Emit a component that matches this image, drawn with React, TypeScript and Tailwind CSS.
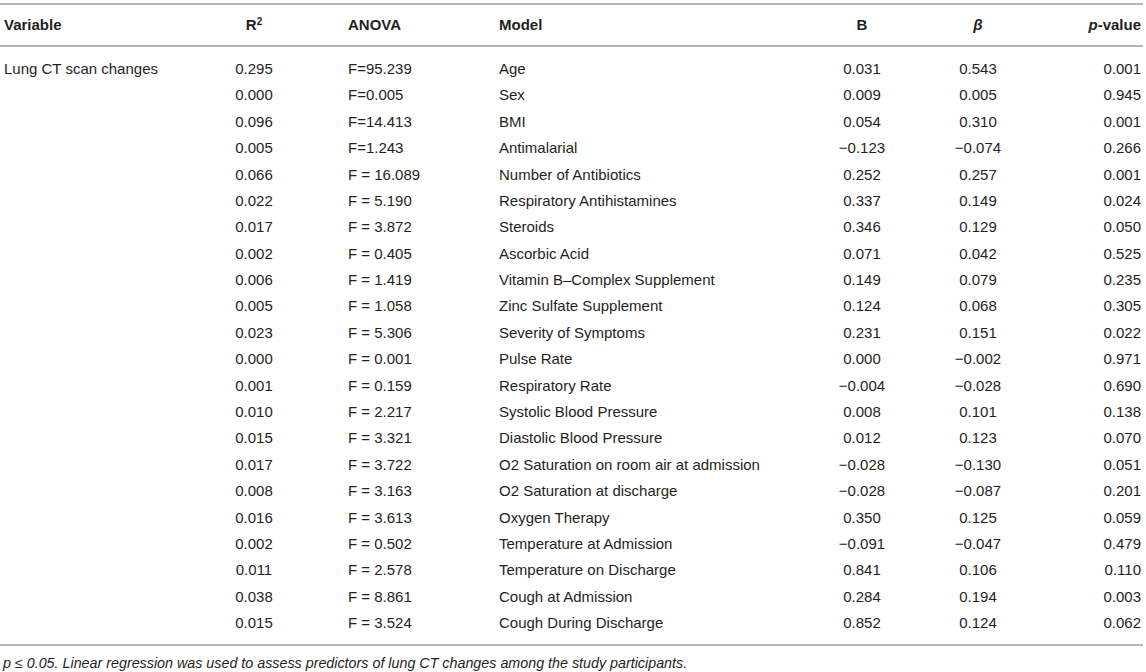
import React from "react";

const rows: [string, string, string, string, string, string][] = [
  ["0.295", "F=95.239", "Age", "0.031", "0.543", "0.001"],
  ["0.000", "F=0.005", "Sex", "0.009", "0.005", "0.945"],
  ["0.096", "F=14.413", "BMI", "0.054", "0.310", "0.001"],
  ["0.005", "F=1.243", "Antimalarial", "\u22120.123", "\u22120.074", "0.266"],
  ["0.066", "F = 16.089", "Number of Antibiotics", "0.252", "0.257", "0.001"],
  ["0.022", "F = 5.190", "Respiratory Antihistamines", "0.337", "0.149", "0.024"],
  ["0.017", "F = 3.872", "Steroids", "0.346", "0.129", "0.050"],
  ["0.002", "F = 0.405", "Ascorbic Acid", "0.071", "0.042", "0.525"],
  ["0.006", "F = 1.419", "Vitamin B\u2013Complex Supplement", "0.149", "0.079", "0.235"],
  ["0.005", "F = 1.058", "Zinc Sulfate Supplement", "0.124", "0.068", "0.305"],
  ["0.023", "F = 5.306", "Severity of Symptoms", "0.231", "0.151", "0.022"],
  ["0.000", "F = 0.001", "Pulse Rate", "0.000", "\u22120.002", "0.971"],
  ["0.001", "F = 0.159", "Respiratory Rate", "\u22120.004", "\u22120.028", "0.690"],
  ["0.010", "F = 2.217", "Systolic Blood Pressure", "0.008", "0.101", "0.138"],
  ["0.015", "F = 3.321", "Diastolic Blood Pressure", "0.012", "0.123", "0.070"],
  ["0.017", "F = 3.722", "O2 Saturation on room air at admission", "\u22120.028", "\u22120.130", "0.051"],
  ["0.008", "F = 3.163", "O2 Saturation at discharge", "\u22120.028", "\u22120.087", "0.201"],
  ["0.016", "F = 3.613", "Oxygen Therapy", "0.350", "0.125", "0.059"],
  ["0.002", "F = 0.502", "Temperature at Admission", "\u22120.091", "\u22120.047", "0.479"],
  ["0.011", "F = 2.578", "Temperature on Discharge", "0.841", "0.106", "0.110"],
  ["0.038", "F = 8.861", "Cough at Admission", "0.284", "0.194", "0.003"],
  ["0.015", "F = 3.524", "Cough During Discharge", "0.852", "0.124", "0.062"],
];

const grid =
  "grid grid-cols-[214px_80px_205px_313px_100px_132px_97px] items-center";

export default function App() {
  return (
    <div
      className="w-[1146px] h-[672px] bg-white text-[#231f20] text-[15px] overflow-hidden"
      style={{ fontFamily: '"Liberation Sans", Arial, sans-serif' }}
    >
      <div className="pt-[3px]">
        <div className="h-[2px] bg-[#b5b5b5] mr-[3px]" />
        <div className={`${grid} h-[40px] font-bold`}>
          <div className="pl-[4px]">Variable</div>
          <div className="text-center">
            R<sup className="text-[10px]">2</sup>
          </div>
          <div className="pl-[54px]">ANOVA</div>
          <div>Model</div>
          <div className="text-center">B</div>
          <div className="text-center italic">β</div>
          <div className="text-right">
            <span className="italic">p</span>-value
          </div>
        </div>
        <div className="h-[2px] bg-[#b5b5b5] mr-[3px]" />
        <div className="pt-[9px] pb-[7px]">
          {rows.map((r, i) => (
            <div key={i} className={`${grid} h-[26.4px]`}>
              <div className="pl-[4px] whitespace-nowrap">
                {i === 0 ? "Lung CT scan changes" : ""}
              </div>
              <div className="text-center">{r[0]}</div>
              <div className="pl-[54px] whitespace-nowrap">{r[1]}</div>
              <div className="whitespace-nowrap">{r[2]}</div>
              <div className="text-center">{r[3]}</div>
              <div className="text-center">{r[4]}</div>
              <div className="text-right">{r[5]}</div>
            </div>
          ))}
        </div>
        <div className="h-[2px] bg-[#b5b5b5] mr-[3px]" />
        <div className="pl-[3px] pt-[7px] italic text-[14.3px] whitespace-nowrap">
          p ≤ 0.05. Linear regression was used to assess predictors of lung CT
          changes among the study participants.
        </div>
      </div>
    </div>
  );
}
